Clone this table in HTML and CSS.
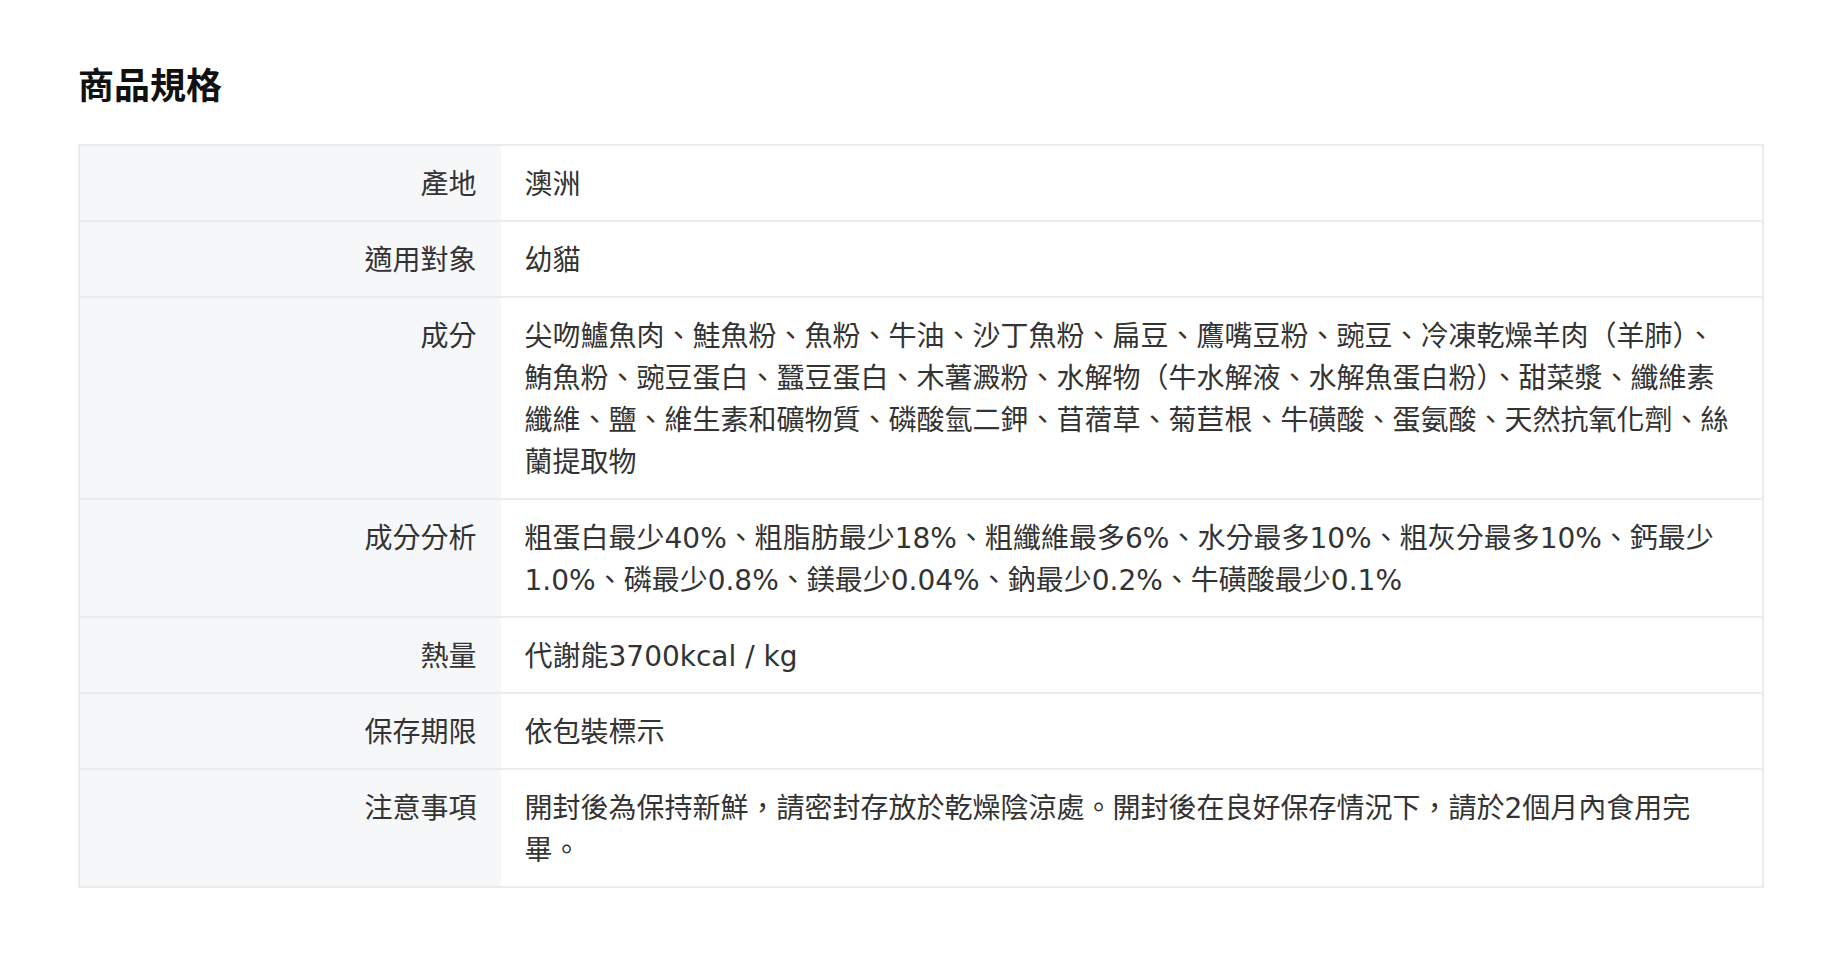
FILE: index.html
```html
<!DOCTYPE html>
<html lang="zh-Hant">
<head>
<meta charset="utf-8">
<title>商品規格</title>
<link rel="stylesheet" href="styles.css">
</head>
<body>
<section class="spec">
  <h2 class="spec-title">商品規格</h2>
  <div class="spec-table">
    <div class="spec-row"><div class="spec-label">產地</div><div class="spec-value">澳洲</div></div>
    <div class="spec-row"><div class="spec-label">適用對象</div><div class="spec-value">幼貓</div></div>
    <div class="spec-row"><div class="spec-label">成分</div><div class="spec-value">尖吻鱸魚肉、鮭魚粉、魚粉、牛油、沙丁魚粉、扁豆、鷹嘴豆粉、豌豆、冷凍乾燥羊肉（羊肺）、鮪魚粉、豌豆蛋白、蠶豆蛋白、木薯澱粉、水解物（牛水解液、水解魚蛋白粉）、甜菜漿、纖維素纖維、鹽、維生素和礦物質、磷酸氫二鉀、苜蓿草、菊苣根、牛磺酸、蛋氨酸、天然抗氧化劑、絲蘭提取物</div></div>
    <div class="spec-row"><div class="spec-label">成分分析</div><div class="spec-value">粗蛋白最少40%、粗脂肪最少18%、粗纖維最多6%、水分最多10%、粗灰分最多10%、鈣最少1.0%、磷最少0.8%、鎂最少0.04%、鈉最少0.2%、牛磺酸最少0.1%</div></div>
    <div class="spec-row"><div class="spec-label">熱量</div><div class="spec-value">代謝能3700kcal / kg</div></div>
    <div class="spec-row"><div class="spec-label">保存期限</div><div class="spec-value">依包裝標示</div></div>
    <div class="spec-row"><div class="spec-label">注意事項</div><div class="spec-value">開封後為保持新鮮，請密封存放於乾燥陰涼處。開封後在良好保存情況下，請於2個月內食用完畢。</div></div>
  </div>
</section>
</body>
</html>
```
FILE: styles.css
```css
html, body {
  margin: 0;
  padding: 0;
  background: #ffffff;
}

body {
  font-family: "DejaVu Sans", "Noto Sans CJK TC", "Noto Sans", sans-serif;
  color: #333333;
}

.spec {
  padding: 56px 76px 40px 78px;
}

.spec-title {
  margin: 0 0 34px 0;
  font-family: "Noto Sans CJK TC", sans-serif;
  font-size: 36px;
  line-height: 54px;
  font-weight: 700;
  color: #111111;
}

.spec-table {
  display: flex;
  flex-direction: column;
  border: 2px solid #ebebeb;
}

.spec-row {
  display: flex;
  border-top: 2px solid #ebebeb;
}

.spec-row:first-child {
  border-top: none;
}

.spec-label {
  flex: 0 0 25%;
  box-sizing: border-box;
  padding: 18px 24px 14px 24px;
  background: #f6f7f9;
  text-align: right;
  font-size: 28px;
  line-height: 42px;
}

.spec-value {
  flex: 1 1 auto;
  min-width: 0;
  padding: 18px 24px 14px 24px;
  font-size: 28px;
  line-height: 42px;
}
```
